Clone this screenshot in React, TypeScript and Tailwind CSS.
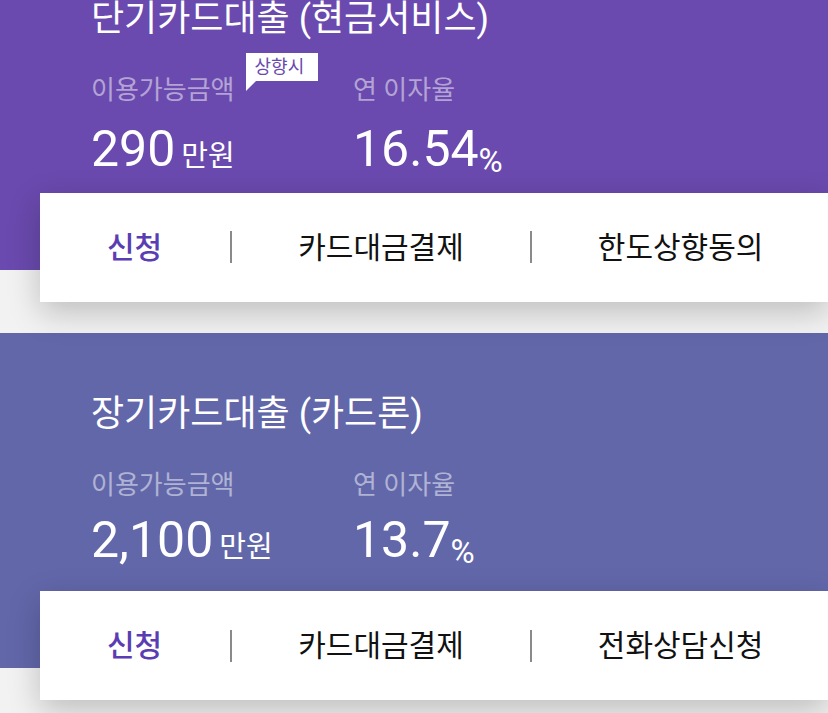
const loans = [
  {
    title: '단기카드대출 (현금서비스)',
    bg: 'bg-[#6a4aae]',
    amount: '290',
    rate: '16.54',
    badge: true,
    valueGap: 'mt-[16px]',
    bottomPad: 'pb-[90px]',
    actions: ['카드대금결제', '한도상향동의'],
  },
  {
    title: '장기카드대출 (카드론)',
    bg: 'bg-[#6267aa]',
    amount: '2,100',
    rate: '13.7',
    badge: false,
    valueGap: 'mt-[12px]',
    bottomPad: 'pb-[98px]',
    actions: ['카드대금결제', '전화상담신청'],
  },
];

function LoanCard({ loan }: { loan: (typeof loans)[number] }) {
  return (
    <section className="mb-[31px]">
      <div className={`${loan.bg} pl-[91px] pt-[61px] ${loan.bottomPad}`}>
        <h2 className="text-[36px] leading-[40px] text-white">{loan.title}</h2>
        <div className="mt-[36px] flex text-[26px] leading-[30px] text-white/50">
          <div className="w-[264px]">
            <span className="relative inline-block">
              이용가능금액
              {loan.badge && (
                <span className="absolute left-[calc(100%+11px)] top-[-22px] whitespace-nowrap bg-white pl-[9px] pr-[14px] text-[18px] leading-[28px] text-[#6a4aae]">
                  상향시
                  <span className="absolute left-0 top-full h-0 w-0 border-r-[10px] border-t-[10px] border-r-transparent border-t-white" />
                </span>
              )}
            </span>
          </div>
          <div className="-ml-[2px]">연 이자율</div>
        </div>
        <div className={`${loan.valueGap} flex text-white`}>
          <div className="flex w-[264px] items-baseline gap-[6px]">
            <span className="text-[50px] leading-[56px]">{loan.amount}</span>
            <span className="text-[29px]">만원</span>
          </div>
          <div className="-ml-[2px] flex items-baseline">
            <span className="text-[50px] leading-[56px]">{loan.rate}</span>
            <span className="relative top-[6px] text-[33px]">%</span>
          </div>
        </div>
      </div>
      <div className="relative -mt-[77px] ml-[40px] flex h-[109px] items-center bg-white pl-[67px] text-[30px] text-[#111] shadow-[0_10px_30px_rgba(0,0,0,0.22)]">
        <span className="mr-[2px] font-medium text-[#5b3db3]">신청</span>
        {loan.actions.map((a) => (
          <div key={a} className="flex items-center">
            <span className="mx-[66px] h-[32px] w-[2px] bg-[#8a8a8a]" />
            <span>{a}</span>
          </div>
        ))}
      </div>
    </section>
  );
}

export default function App() {
  return (
    <div className="min-h-screen overflow-hidden bg-[#f2f2f2] font-[Roboto,'Noto_Sans_CJK_KR',sans-serif]">
      <div className="-mt-[62px]">
        {loans.map((loan) => (
          <LoanCard key={loan.title} loan={loan} />
        ))}
      </div>
    </div>
  );
}
